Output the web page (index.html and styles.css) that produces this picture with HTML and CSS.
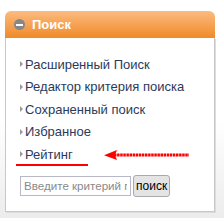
FILE: index.html
```html
<!DOCTYPE html>
<html>
<head>
<meta charset="utf-8">
<link rel="stylesheet" href="styles.css">
</head>
<body>
<div class="panel">
  <div class="header">
    <span class="toggle"><span class="bar"></span></span>
    <span class="title">Поиск</span>
  </div>
  <div class="body">
    <ul class="menu">
      <li><span class="tri"></span>Расширенный Поиск</li>
      <li><span class="tri"></span>Редактор критерия поиска</li>
      <li><span class="tri"></span>Сохраненный поиск</li>
      <li><span class="tri"></span>Избранное</li>
      <li class="marked"><span class="tri"></span>Рейтинг
        <span class="underline"></span>
        <svg class="arrow" width="86" height="12" viewBox="0 0 86 12"><path d="M10 6 H85" stroke="#f00" stroke-width="3.2" stroke-dasharray="2.5 0.6"/><path d="M0 6.2 L13 1 L11 6 L13 11 Z" fill="#f00"/></svg>
      </li>
    </ul>
    <div class="search">
      <input class="field" type="text" placeholder="Введите критерий поиска">
      <button class="btn">поиск</button>
    </div>
  </div>
</div>
</body>
</html>
```
FILE: styles.css
```css
html, body {
  margin: 0;
  padding: 0;
}
body {
  background: linear-gradient(#ffffff 55%, #ececec);
  font-family: "Liberation Sans", Arial, sans-serif;
  width: 224px;
  height: 218px;
  overflow: hidden;
}
.panel {
  margin: 11px 0 0 5px;
  width: 210px;
}
.header {
  height: 27px;
  border-radius: 6px 6px 0 0;
  background: linear-gradient(#fcbb80, #f08a28);
  display: flex;
  align-items: center;
  padding-left: 9px;
  gap: 7px;
}
.toggle {
  width: 11px;
  height: 11px;
  border-radius: 50%;
  background: #878787;
  display: flex;
  align-items: center;
  justify-content: center;
}
.bar {
  width: 7px;
  height: 2px;
  background: #fff;
}
.title {
  color: #fff;
  font-weight: bold;
  font-size: 13px;
}
.body {
  background: #fff;
  border: 1px solid #c8c8c8;
  border-top: none;
  height: 173px;
  box-shadow: 1px 1px 0 #dcdcdc;
}
.menu {
  list-style: none;
  margin: 0;
  padding: 15px 0 0 14px;
}
.menu li {
  position: relative;
  height: 22.5px;
  font-size: 13px;
  color: #2c3a5a;
  display: flex;
  align-items: center;
}
.tri {
  width: 0;
  height: 0;
  border-left: 3px solid #999;
  border-top: 3px solid transparent;
  border-bottom: 3px solid transparent;
  margin-right: 2px;
}
.underline {
  position: absolute;
  left: -4px;
  top: 21px;
  width: 72px;
  height: 2px;
  background: #f00;
}
.arrow {
  position: absolute;
  left: 84px;
  top: 6px;
}
.search {
  display: flex;
  align-items: center;
  gap: 2px;
  padding: 9px 0 0 14px;
}
.field {
  box-sizing: border-box;
  width: 111px;
  height: 20px;
  border: 1px solid #b8b8c8;
  padding: 0 3px;
  font-family: "Liberation Sans", Arial, sans-serif;
  font-size: 11.6px;
  color: #888;
  margin: 0;
}
.field::placeholder {
  color: #8a8a8a;
}
.btn {
  box-sizing: border-box;
  height: 22px;
  padding: 0 2px;
  border: 1px solid #aaa;
  border-radius: 3px;
  background: #e4e4e4;
  font-family: "Liberation Sans", Arial, sans-serif;
  font-size: 12px;
  color: #000;
  margin: 0;
}
```
